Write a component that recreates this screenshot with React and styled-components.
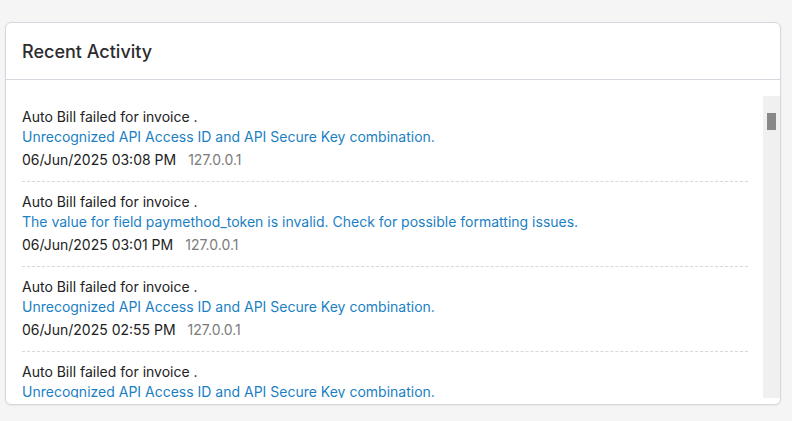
import styled, { createGlobalStyle } from "styled-components";

const GlobalStyle = createGlobalStyle`
  html, body {
    margin: 0;
    background: #f5f5f6;
    font-family: Inter, "Noto Sans", sans-serif;
  }
`;

const activities = [
  {
    id: 1,
    message: "Unrecognized API Access ID and API Secure Key combination.",
    date: "06/Jun/2025 03:08 PM",
  },
  {
    id: 2,
    message:
      "The value for field paymethod_token is invalid. Check for possible formatting issues.",
    date: "06/Jun/2025 03:01 PM",
  },
  {
    id: 3,
    message: "Unrecognized API Access ID and API Secure Key combination.",
    date: "06/Jun/2025 02:55 PM",
  },
  {
    id: 4,
    message: "Unrecognized API Access ID and API Secure Key combination.",
    date: "06/Jun/2025 02:49 PM",
  },
];

export default function App() {
  return (
    <>
      <GlobalStyle />
      <Page>
        <Card>
          <CardHeader>
            <Title>Recent Activity</Title>
          </CardHeader>
          <CardBody>
            <ActivityList>
              {activities.map((item) => (
                <ActivityItem key={item.id}>
                  <Action>Auto Bill failed for invoice .</Action>
                  <Message>{item.message}</Message>
                  <Meta>
                    <DateText>{item.date}</DateText>
                    <Ip>127.0.0.1</Ip>
                  </Meta>
                </ActivityItem>
              ))}
            </ActivityList>
            <ScrollRail>
              <ScrollThumb />
            </ScrollRail>
          </CardBody>
        </Card>
      </Page>
    </>
  );
}

const Page = styled.div`
  padding: 22px 11px 16px 5px;
`;

const Card = styled.div`
  background: #fff;
  border: 1px solid #d6d6de;
  border-radius: 6px;
  box-shadow: 0 1px 2px rgba(0, 0, 0, 0.06);
  overflow: hidden;
`;

const CardHeader = styled.div`
  height: 56px;
  display: flex;
  align-items: center;
  padding: 0 16px;
  border-bottom: 1px solid #d6d6de;
`;

const Title = styled.h3`
  margin: 0;
  font-size: 18px;
  font-weight: 500;
  color: #2c2c2e;
`;

const CardBody = styled.div`
  display: flex;
  height: 302px;
  margin: 16px 0 6px 0;
`;

const ActivityList = styled.div`
  flex: 1;
  overflow: hidden;
  padding: 1px 15px 0 16px;
`;

const ScrollRail = styled.div`
  width: 17px;
  background: #f0f0f0;
  display: flex;
  justify-content: center;
  padding-top: 17px;
`;

const ScrollThumb = styled.div`
  width: 9px;
  height: 17px;
  background: #888;
`;

const ActivityItem = styled.div`
  padding: 10px 0 11px 0;
  border-bottom: 1px dashed #d8d8d8;
`;

const Action = styled.div`
  font-size: 14px;
  line-height: 20px;
  color: #222;
`;

const Message = styled.div`
  font-size: 14px;
  line-height: 20px;
  color: #1b7fc4;
`;

const Meta = styled.div`
  display: flex;
  align-items: baseline;
  gap: 12px;
  margin-top: 3px;
  line-height: 20px;
`;

const DateText = styled.span`
  font-size: 14px;
  color: #222;
`;

const Ip = styled.span`
  font-size: 14px;
  color: #7b7b7b;
`;
